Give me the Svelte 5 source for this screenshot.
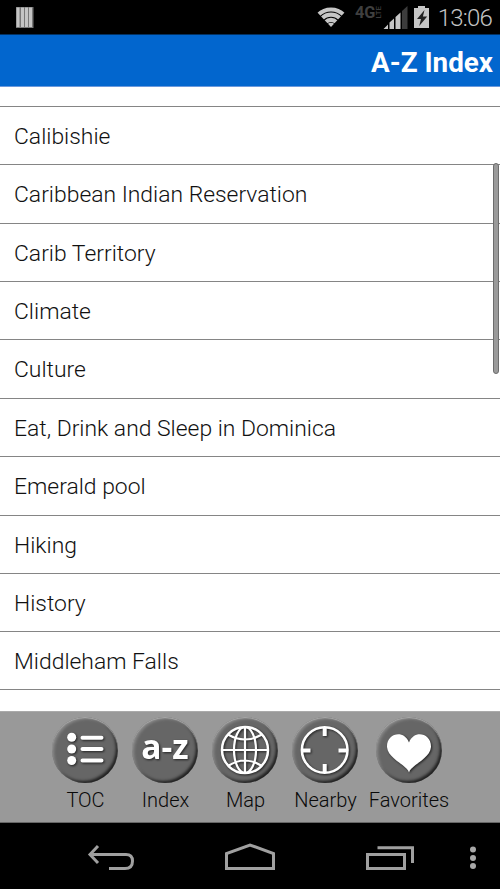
<script>
  const entries = [
    'Calibishie',
    'Caribbean Indian Reservation',
    'Carib Territory',
    'Climate',
    'Culture',
    'Eat, Drink and Sleep in Dominica',
    'Emerald pool',
    'Hiking',
    'History',
    'Middleham Falls'
  ];

  const tabs = [
    { id: 'toc', label: 'TOC', width: 80 },
    { id: 'index', label: 'Index', width: 80 },
    { id: 'map', label: 'Map', width: 80 },
    { id: 'nearby', label: 'Nearby', width: 80 },
    { id: 'favorites', label: 'Favorites', width: 87 }
  ];
</script>

<div class="screen">
  <div class="status">
    <svg class="notification" width="18" height="21" viewBox="0 0 18 21">
      <path d="M0 0h17.5v21H0z" fill="#777" />
      <path d="M.5 .5h3v19.500h-3zM5 .5h3v19.500h-3zM9 .5h3v19.500h-3zM13 .5h3v19.500h-3z" fill="#c4c4c4" />
    </svg>
    <svg class="indicators" width="114" height="24" viewBox="0 0 114 24">
      <defs>
        <clipPath id="wifi-fan"><path d="M14 22L-1 6V0H29V6z" /></clipPath>
      </defs>
      <g clip-path="url(#wifi-fan)" fill="none" stroke="#c6c6c6">
        <circle cx="14" cy="22.500" r="18" stroke-width="4" />
        <circle cx="14" cy="22.500" r="12.800" stroke-width="4.300" />
        <circle cx="14" cy="22.500" r="7.600" stroke-width="4.200" />
        <circle cx="14" cy="22.500" r="2.400" stroke-width="4.800" />
      </g>
      <text x="38" y="13" class="network" textLength="20.500" lengthAdjust="spacingAndGlyphs">4G</text>
      <text class="lte" transform="translate(64 13.500) rotate(-90)" textLength="12.500" lengthAdjust="spacingAndGlyphs">LTE</text>
      <path d="M66.500 24L71 19.500V24zM72.500 24V17.500L77 13.500V24zM78.500 24V12L83.500 7.500V24z" fill="#c6c6c6" />
      <path d="M85 24V6L90.500 1V24z" fill="#3c3c3c" />
      <path d="M97 3h4V1h7v2h4v20H97z" fill="#c6c6c6" />
      <path d="M107.500 5L100 14h4l-1.800 7 8-9.500h-4.300z" fill="#222" />
    </svg>
    <span class="clock">13:06</span>
  </div>

  <header>A-Z Index</header>

  <main>
    <ul>
      {#each entries as entry}
        <li>{entry}</li>
      {/each}
    </ul>
    <div class="scrollbar"></div>
  </main>

  <nav>
    {#each tabs as tab}
      <div class="tab" style="width: {tab.width}px">
        <div class="button">
          {#if tab.id === 'index'}
            <span class="letters">a-z</span>
          {:else}
            <svg width="66" height="66" viewBox="0 0 66 66" fill="none" stroke="#fff">
              {#if tab.id === 'toc'}
                <g fill="#fff" stroke="none">
                  <circle cx="19.700" cy="20.300" r="4.500" />
                  <circle cx="19.700" cy="32" r="4.500" />
                  <circle cx="19.700" cy="43.500" r="4.500" />
                </g>
                <path d="M30.500 20.700H49.500M30.500 32H49.500M30.500 43.500H49.500" stroke-width="4" stroke-linecap="round" />
              {:else if tab.id === 'map'}
                <circle cx="33" cy="33" r="23" stroke-width="2.500" />
                <ellipse cx="33" cy="33" rx="11" ry="23" stroke-width="2.200" />
                <path d="M33 10V56M10 33H56M16 17.500Q33 27.500 50 17.500M16 49Q33 38 50 49" stroke-width="2.200" />
              {:else if tab.id === 'nearby'}
                <circle cx="32.700" cy="33" r="22.800" stroke-width="2.600" />
                <path d="M32.700 10v9M32.700 47v9M9.500 33.500h9M46.500 33.500h9" stroke-width="4" />
              {:else}
                <path d="M33 55.500C31 48 12 42 11 30C10.500 16 28 12 33 25.500C38 12 55.500 16 55 30C54 42 35 48 33 55.500z" fill="#fff" stroke="none" />
              {/if}
            </svg>
          {/if}
        </div>
        <span class="label">{tab.label}</span>
      </div>
    {/each}
  </nav>

  <div class="system">
    <svg width="500" height="66" viewBox="0 0 500 66" fill="none" stroke="#a0a0a0" stroke-width="3">
      <path d="M90 31.500H126Q132.500 31.500 132.500 38Q132.500 45.500 125 45.500H109M98 23L90 31.500L98 40" />
      <path d="M226.500 45.500V30.500L250 22L273.500 30.500V45.500z" />
      <path d="M367.500 31.500H404.500V45.500H367.500zM377.500 24.700H412.500V40" />
      <g fill="#a8a8a8" stroke="none">
        <circle cx="473" cy="26.500" r="3" />
        <circle cx="473" cy="35" r="3" />
        <circle cx="473" cy="43" r="3" />
      </g>
    </svg>
  </div>
</div>

<style>
  :global(body) {
    background: #000;
  }
  .screen {
    display: flex;
    flex-direction: column;
    width: 500px;
    height: 889px;
    overflow: hidden;
    background: #000;
    font-family: Roboto, sans-serif;
  }
  .status {
    display: flex;
    align-items: flex-start;
    flex: none;
    box-sizing: border-box;
    height: 34px;
    padding: 0 8px 0 16px;
  }
  .notification {
    margin-top: 7px;
  }
  .indicators {
    margin: 5px 7px 0 auto;
    overflow: visible;
  }
  .network {
    font-size: 16px;
    font-weight: 700;
    fill: #3f3f3f;
  }
  .lte {
    font-size: 7px;
    fill: #4b4b4b;
  }
  .clock {
    margin-top: 4px;
    color: #c4c4c4;
    font-size: 24px;
    font-weight: 350;
    letter-spacing: -0.8px;
    line-height: 28px;
  }
  header {
    flex: none;
    box-sizing: border-box;
    height: 53px;
    padding: 1px 7px 0 0;
    border-top: 1px solid #033263;
    border-bottom: 1px solid #6b99dc;
    background: #0266ce;
    color: #fff;
    font-size: 27.8px;
    font-weight: 700;
    line-height: 53px;
    text-align: right;
  }
  main {
    position: relative;
    flex: none;
    height: 624px;
    background: #fff;
  }
  ul {
    margin: 0;
    padding: 19px 0 0;
    list-style: none;
  }
  li {
    box-sizing: border-box;
    height: 58.36px;
    padding-left: 14px;
    border-top: 1px solid #858585;
    color: #111;
    font-size: 22.9px;
    font-weight: 350;
    line-height: 60px;
  }
  li:last-child {
    border-bottom: 1px solid #858585;
  }
  .scrollbar {
    position: absolute;
    top: 76px;
    right: 1px;
    box-sizing: border-box;
    width: 6px;
    height: 211px;
    border: 1px solid #6d6d6d;
    border-radius: 3px;
    background: #9b9b9b;
  }
  nav {
    display: flex;
    flex: none;
    box-sizing: border-box;
    height: 112px;
    padding: 5px 0 0 45px;
    border-top: 1px solid #aaa;
    border-bottom: 1px solid #666;
    background: #999;
  }
  .tab {
    display: flex;
    flex-direction: column;
    align-items: center;
  }
  .button {
    box-sizing: border-box;
    width: 66px;
    height: 66px;
    border-radius: 50%;
    background: #666;
    box-shadow:
      inset 0 1px 1px #aaa,
      inset 2px 2px 3px #888,
      inset -2px -2px 3px #202020;
    text-align: center;
  }
  .button svg,
  .letters {
    display: block;
    filter: drop-shadow(1px 1px 1px #222);
  }
  .letters {
    color: #fff;
    font-family: 'Open Sans', sans-serif;
    font-size: 33.5px;
    font-weight: 700;
    line-height: 58px;
  }
  .label {
    margin-top: 5px;
    padding-left: 1px;
    color: #090909;
    font-size: 20px;
    font-weight: 350;
    line-height: 24px;
  }
  .system {
    flex: none;
    height: 66px;
  }
</style>
